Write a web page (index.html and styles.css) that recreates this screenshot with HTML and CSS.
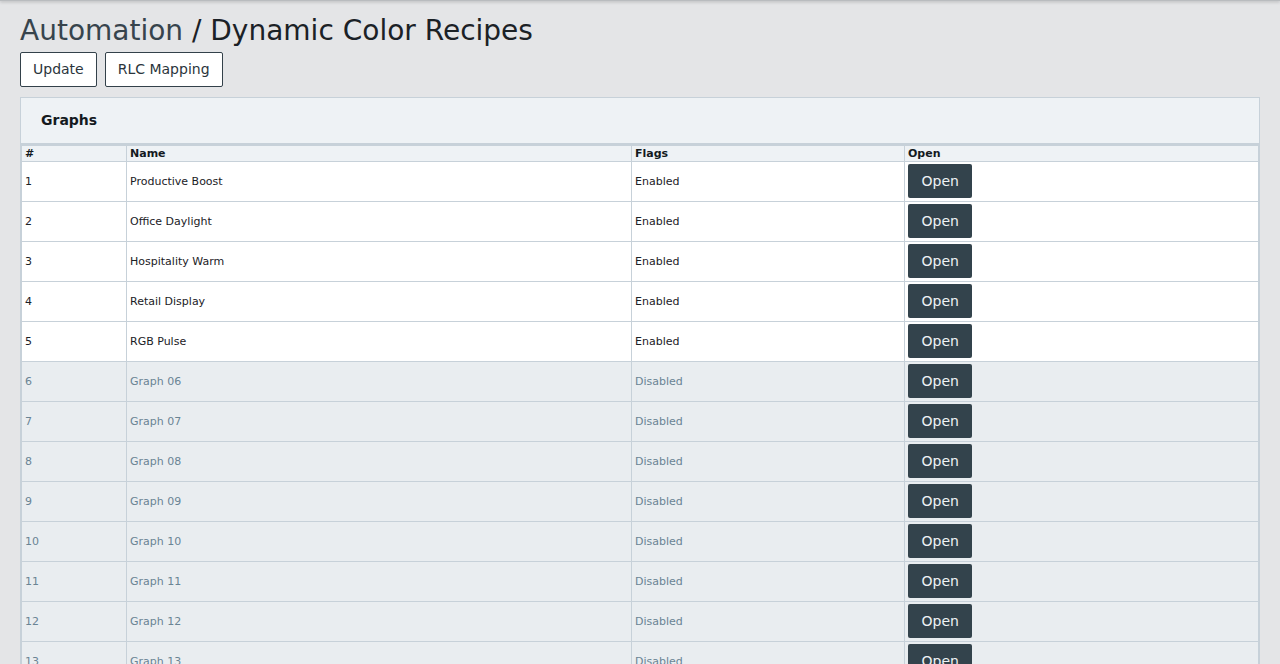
FILE: index.html
```html
<!DOCTYPE html>
<html lang="en">
<head>
    <meta charset="UTF-8">
    <meta name="viewport" content="width=device-width, initial-scale=1.0">
    <title>Dynamic Color Recipes | Automation</title>
    <link rel="stylesheet" href="styles.css">
</head>
<body>
    <div class="top-shadow"></div>
    <div class="page">
        <h1 class="page-title"><span class="crumb">Automation</span> / Dynamic Color Recipes</h1>

        <div class="toolbar">
            <button class="btn-outline">Update</button>
            <button class="btn-outline">RLC Mapping</button>
        </div>

        <div class="card">
            <div class="card-header">Graphs</div>
            <table class="graph-table">
                <thead>
                    <tr>
                        <th class="col-num">#</th>
                        <th class="col-name">Name</th>
                        <th class="col-flags">Flags</th>
                        <th>Open</th>
                    </tr>
                </thead>
                <tbody>
                    <tr><td>1</td><td>Productive Boost</td><td>Enabled</td><td><button class="btn-open">Open</button></td></tr>
                    <tr><td>2</td><td>Office Daylight</td><td>Enabled</td><td><button class="btn-open">Open</button></td></tr>
                    <tr><td>3</td><td>Hospitality Warm</td><td>Enabled</td><td><button class="btn-open">Open</button></td></tr>
                    <tr><td>4</td><td>Retail Display</td><td>Enabled</td><td><button class="btn-open">Open</button></td></tr>
                    <tr><td>5</td><td>RGB Pulse</td><td>Enabled</td><td><button class="btn-open">Open</button></td></tr>
                    <tr class="disabled"><td>6</td><td>Graph 06</td><td>Disabled</td><td><button class="btn-open">Open</button></td></tr>
                    <tr class="disabled"><td>7</td><td>Graph 07</td><td>Disabled</td><td><button class="btn-open">Open</button></td></tr>
                    <tr class="disabled"><td>8</td><td>Graph 08</td><td>Disabled</td><td><button class="btn-open">Open</button></td></tr>
                    <tr class="disabled"><td>9</td><td>Graph 09</td><td>Disabled</td><td><button class="btn-open">Open</button></td></tr>
                    <tr class="disabled"><td>10</td><td>Graph 10</td><td>Disabled</td><td><button class="btn-open">Open</button></td></tr>
                    <tr class="disabled"><td>11</td><td>Graph 11</td><td>Disabled</td><td><button class="btn-open">Open</button></td></tr>
                    <tr class="disabled"><td>12</td><td>Graph 12</td><td>Disabled</td><td><button class="btn-open">Open</button></td></tr>
                    <tr class="disabled"><td>13</td><td>Graph 13</td><td>Disabled</td><td><button class="btn-open">Open</button></td></tr>
                    <tr class="disabled"><td>14</td><td>Graph 14</td><td>Disabled</td><td><button class="btn-open">Open</button></td></tr>
                    <tr class="disabled"><td>15</td><td>Graph 15</td><td>Disabled</td><td><button class="btn-open">Open</button></td></tr>
                    <tr class="disabled"><td>16</td><td>Graph 16</td><td>Disabled</td><td><button class="btn-open">Open</button></td></tr>
                </tbody>
            </table>
        </div>
    </div>
</body>
</html>
```

FILE: styles.css
```css
html {
    background-color: #e4e5e7;
}

body {
    font-family: "DejaVu Sans", Verdana, sans-serif;
    background-color: #e4e5e7;
    color: #1b2126;
    margin: 0;
}

.top-shadow {
    height: 1px;
    background-color: #b9bcbf;
    box-shadow: 0 1px 3px rgba(0, 0, 0, 0.35);
}

.page {
    padding: 0 20px 20px;
}

.page-title {
    font-size: 28px;
    font-weight: normal;
    line-height: 34px;
    margin: 13px 0 4px;
    color: #1b2126;
}

.crumb {
    color: #37444d;
}

.toolbar {
    display: flex;
    gap: 8px;
    margin-bottom: 10px;
}

.btn-outline {
    font-family: inherit;
    font-size: 14px;
    line-height: 17px;
    padding: 8px 12px;
    background-color: #fff;
    color: #2b353c;
    border: 1px solid #33414a;
    border-radius: 2px;
    cursor: pointer;
}

.btn-outline:hover {
    background-color: #f1f3f5;
}

.card {
    border: 1px solid #c7d1d9;
    background-color: #eef2f5;
}

.card-header {
    font-size: 14px;
    font-weight: bold;
    line-height: 17px;
    padding: 14px 20px;
    border-bottom: 1px solid #c7d1d9;
    color: #141a1e;
}

.graph-table {
    width: 100%;
    border-collapse: collapse;
    table-layout: fixed;
    font-size: 11px;
    border: 1px solid #c7d1d9;
    border-top-width: 2px;
}

.graph-table th {
    text-align: left;
    font-weight: bold;
    line-height: 13px;
    padding: 1px 3px 1px;
    background-color: #eef2f5;
    border: 1px solid #c7d1d9;
    color: #141a1e;
}

.col-num {
    width: 98px;
}

.col-name {
    width: 498px;
}

.col-flags {
    width: 266px;
}

.graph-table td {
    padding: 2px 3px 3px;
    border: 1px solid #c7d1d9;
    background-color: #fff;
    color: #1b2126;
    vertical-align: middle;
}

.graph-table tr.disabled td {
    background-color: #e9edf0;
    color: #6a8494;
}

.btn-open {
    display: block;
    font-family: inherit;
    font-size: 14px;
    line-height: 16px;
    padding: 9px 13.5px;
    background-color: #33434c;
    color: #eef2f4;
    border: none;
    border-radius: 2px;
    cursor: pointer;
}

.btn-open:hover {
    background-color: #26323a;
}
```
